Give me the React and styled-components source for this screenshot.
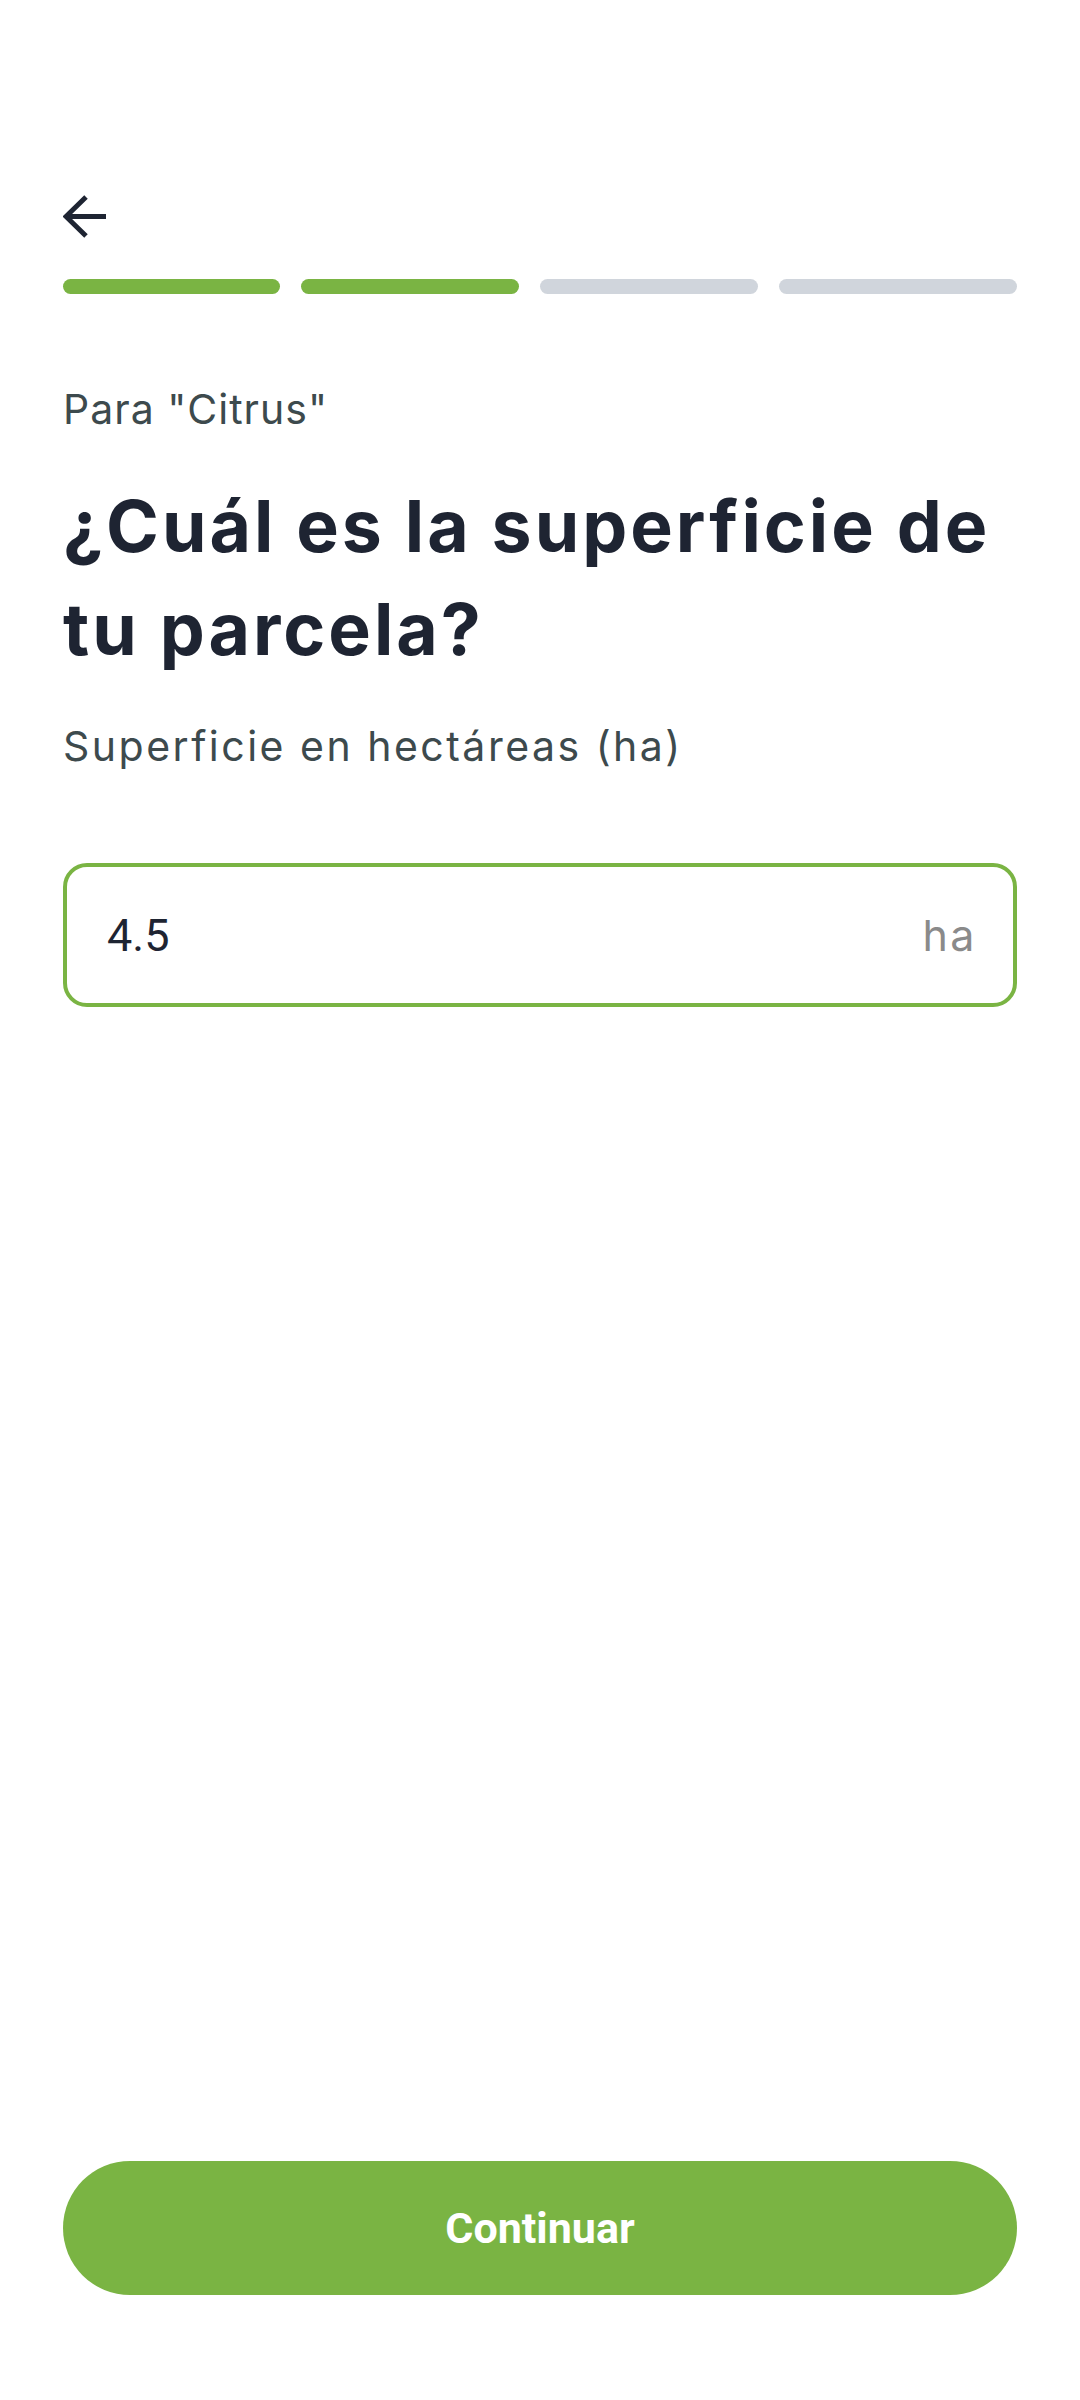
import React from "react";
import styled, { createGlobalStyle } from "styled-components";

const Global = createGlobalStyle`
  html, body { margin: 0; padding: 0; background: #ffffff; }
  body { font-family: "Inter", "Noto Sans", sans-serif; }
  * { box-sizing: border-box; }
`;

const Page = styled.div`
  width: 1080px;
  min-height: 2400px;
  display: flex;
  flex-direction: column;
  padding: 195px 63px 105px;
  background: #ffffff;
`;

const BackButton = styled.button`
  width: 44px;
  height: 44px;
  padding: 0;
  border: none;
  background: none;
  display: flex;
  color: #1e2432;
  cursor: pointer;
`;

const Progress = styled.div`
  margin-top: 40px;
  display: grid;
  grid-template-columns: 217fr 218fr 217fr 238fr;
  column-gap: 21px;
`;

const Step = styled.div`
  height: 15px;
  border-radius: 8px;
  background: ${(p) => (p.$done ? "#7ab443" : "#d0d5dc")};
`;

const Kicker = styled.p`
  margin: 87px 0 0;
  font-family: "Inter", sans-serif;
  font-size: 41px;
  line-height: 57px;
  font-weight: 400;
  letter-spacing: 1px;
  color: #3d4a4d;
`;

const Title = styled.h1`
  margin: 37px 0 0;
  font-family: "Inter", sans-serif;
  font-size: 71.5px;
  line-height: 103px;
  font-weight: 700;
  letter-spacing: 3px;
  color: #1e2432;
`;

const Subtitle = styled.p`
  margin: 37px 0 0;
  font-family: "Inter", sans-serif;
  font-size: 41px;
  line-height: 57px;
  font-weight: 400;
  letter-spacing: 2.5px;
  color: #3d4a4d;
`;

const Field = styled.label`
  margin-top: 88px;
  height: 144px;
  border: 4px solid #7ab443;
  border-radius: 24px;
  display: flex;
  align-items: center;
  padding: 0 36px 0 40px;
`;

const Input = styled.input`
  flex: 1;
  min-width: 0;
  border: none;
  outline: none;
  background: transparent;
  font-family: "Roboto", sans-serif;
  font-size: 45px;
  color: #1e2432;
  padding: 0;
`;

const Unit = styled.span`
  font-family: "Inter", sans-serif;
  font-size: 43px;
  letter-spacing: 2.5px;
  color: #8a8a8a;
`;

const Spacer = styled.div`
  flex: 1;
`;

const PrimaryButton = styled.button`
  height: 134px;
  border: none;
  border-radius: 67px;
  background: #7ab443;
  color: #ffffff;
  font-family: "Roboto", sans-serif;
  font-weight: 700;
  font-size: 43px;
  cursor: pointer;
`;

function ArrowBack() {
  return (
    <svg width="44" height="44" viewBox="0 0 44 44" fill="none">
      <path d="M23 2 L3 21.5 L23 41" stroke="currentColor" strokeWidth="5" strokeLinejoin="miter" />
      <path d="M3 21.5 H43" stroke="currentColor" strokeWidth="5" />
    </svg>
  );
}

export default function App() {
  const steps = [true, true, false, false];
  return (
    <>
      <Global />
      <Page>
        <BackButton aria-label="Volver">
          <ArrowBack />
        </BackButton>
        <Progress>
          {steps.map((d, i) => (
            <Step key={i} $done={d} />
          ))}
        </Progress>
        <Kicker>Para "Citrus"</Kicker>
        <Title>¿Cuál es la superficie de tu parcela?</Title>
        <Subtitle>Superficie en hectáreas (ha)</Subtitle>
        <Field>
          <Input defaultValue="4.5" inputMode="decimal" />
          <Unit>ha</Unit>
        </Field>
        <Spacer />
        <PrimaryButton>Continuar</PrimaryButton>
      </Page>
    </>
  );
}
